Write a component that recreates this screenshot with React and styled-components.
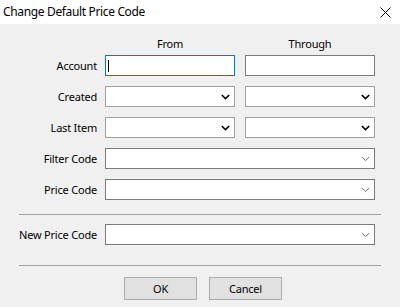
import styled, { createGlobalStyle } from "styled-components";

const GlobalStyle = createGlobalStyle`
  html, body {
    margin: 0;
    padding: 0;
    background: #f0f0f0;
  }
  body {
    font-family: "Noto Sans", "Liberation Sans", sans-serif;
    font-size: 11px;
    letter-spacing: -0.2px;
    color: #000;
  }
`;

const Window = styled.div`
  width: 400px;
  height: 307px;
  background: #f0f0f0;
  overflow: hidden;
`;

const TitleBar = styled.div`
  height: 24px;
  background: #fff;
  display: flex;
  align-items: center;
  justify-content: space-between;
  padding: 0 9px 0 3px;
`;

const Title = styled.span`
  font-size: 12px;
  line-height: 16px;
  letter-spacing: -0.35px;
`;

const Body = styled.div`
  padding-top: 12px;
`;

const Rows = styled.div`
  display: flex;
  flex-direction: column;
  gap: 10px;
`;

const Row = styled.div`
  display: flex;
  align-items: center;
  height: ${(p) => p.$height || 21}px;
`;

const Label = styled.div`
  width: 97px;
  flex: none;
  text-align: right;
  white-space: nowrap;
  margin-right: 8px;
`;

const Fields = styled.div`
  width: 270px;
  height: 100%;
  display: grid;
  grid-template-columns: ${(p) => (p.$split ? "130px 130px" : "270px")};
  column-gap: 10px;
`;

const ColumnHead = styled.div`
  text-align: center;
  line-height: 16px;
`;

const Box = styled.div`
  box-sizing: border-box;
  height: 21px;
  background: #fff;
  border: 1px solid ${(p) => p.$border || "#7a7a7a"};
  display: flex;
  align-items: center;
`;

const TextBox = styled(Box)`
  padding-left: 2px;
`;

const Caret = styled.span`
  display: block;
  width: 1px;
  height: 12px;
  background: #000;
`;

const Combo = styled(Box)`
  justify-content: flex-end;
  padding-right: 4px;
`;

const Divider = styled.div`
  height: 1px;
  margin: 0 19px;
  background: #a0a0a0;
`;

const Buttons = styled.div`
  display: flex;
  gap: 12px;
  padding-left: 124px;
`;

const Button = styled.button`
  box-sizing: border-box;
  width: 73px;
  height: 23px;
  padding: 0;
  background: #e1e1e1;
  border: 1px solid #adadad;
  font-family: inherit;
  font-size: 11px;
  letter-spacing: -0.2px;
  color: #000;
`;

const Chevron = ({ dark }) => (
  <svg width="9" height="6" viewBox="0 0 9 6">
    <path
      d="M0.8 1 L4.5 4.6 L8.2 1"
      fill="none"
      stroke={dark ? "#000" : "#6d6d6d"}
      strokeWidth={dark ? 1.6 : 1}
    />
  </svg>
);

const CloseIcon = () => (
  <svg width="11" height="11" viewBox="0 0 11 11">
    <path d="M0.5 0.5 L10.5 10.5 M10.5 0.5 L0.5 10.5" stroke="#000" strokeWidth="1" />
  </svg>
);

const ComboRow = ({ label, dark }) => (
  <Row>
    <Label>{label}</Label>
    <Fields $split>
      <Combo $border="#a0a0a0">
        <Chevron dark={dark} />
      </Combo>
      <Combo $border="#a0a0a0">
        <Chevron dark={dark} />
      </Combo>
    </Fields>
  </Row>
);

const WideCombo = ({ label }) => (
  <Row>
    <Label>{label}</Label>
    <Fields>
      <Combo>
        <Chevron />
      </Combo>
    </Fields>
  </Row>
);

const App = () => (
  <Window>
    <GlobalStyle />
    <TitleBar>
      <Title>Change Default Price Code</Title>
      <CloseIcon />
    </TitleBar>
    <Body>
      <Row $height={16} style={{ marginBottom: 3 }}>
        <Label />
        <Fields $split>
          <ColumnHead>From</ColumnHead>
          <ColumnHead>Through</ColumnHead>
        </Fields>
      </Row>
      <Rows>
        <Row>
          <Label>Account</Label>
          <Fields $split>
            <TextBox $border="#0078d7">
              <Caret />
            </TextBox>
            <TextBox />
          </Fields>
        </Row>
        <ComboRow label="Created" dark />
        <ComboRow label="Last Item" dark />
        <WideCombo label="Filter Code" />
        <WideCombo label="Price Code" />
      </Rows>
      <Divider style={{ marginTop: 14, marginBottom: 9 }} />
      <WideCombo label="New Price Code" />
      <Divider style={{ marginTop: 20, marginBottom: 11 }} />
      <Buttons>
        <Button>OK</Button>
        <Button>Cancel</Button>
      </Buttons>
    </Body>
  </Window>
);

export default App;
